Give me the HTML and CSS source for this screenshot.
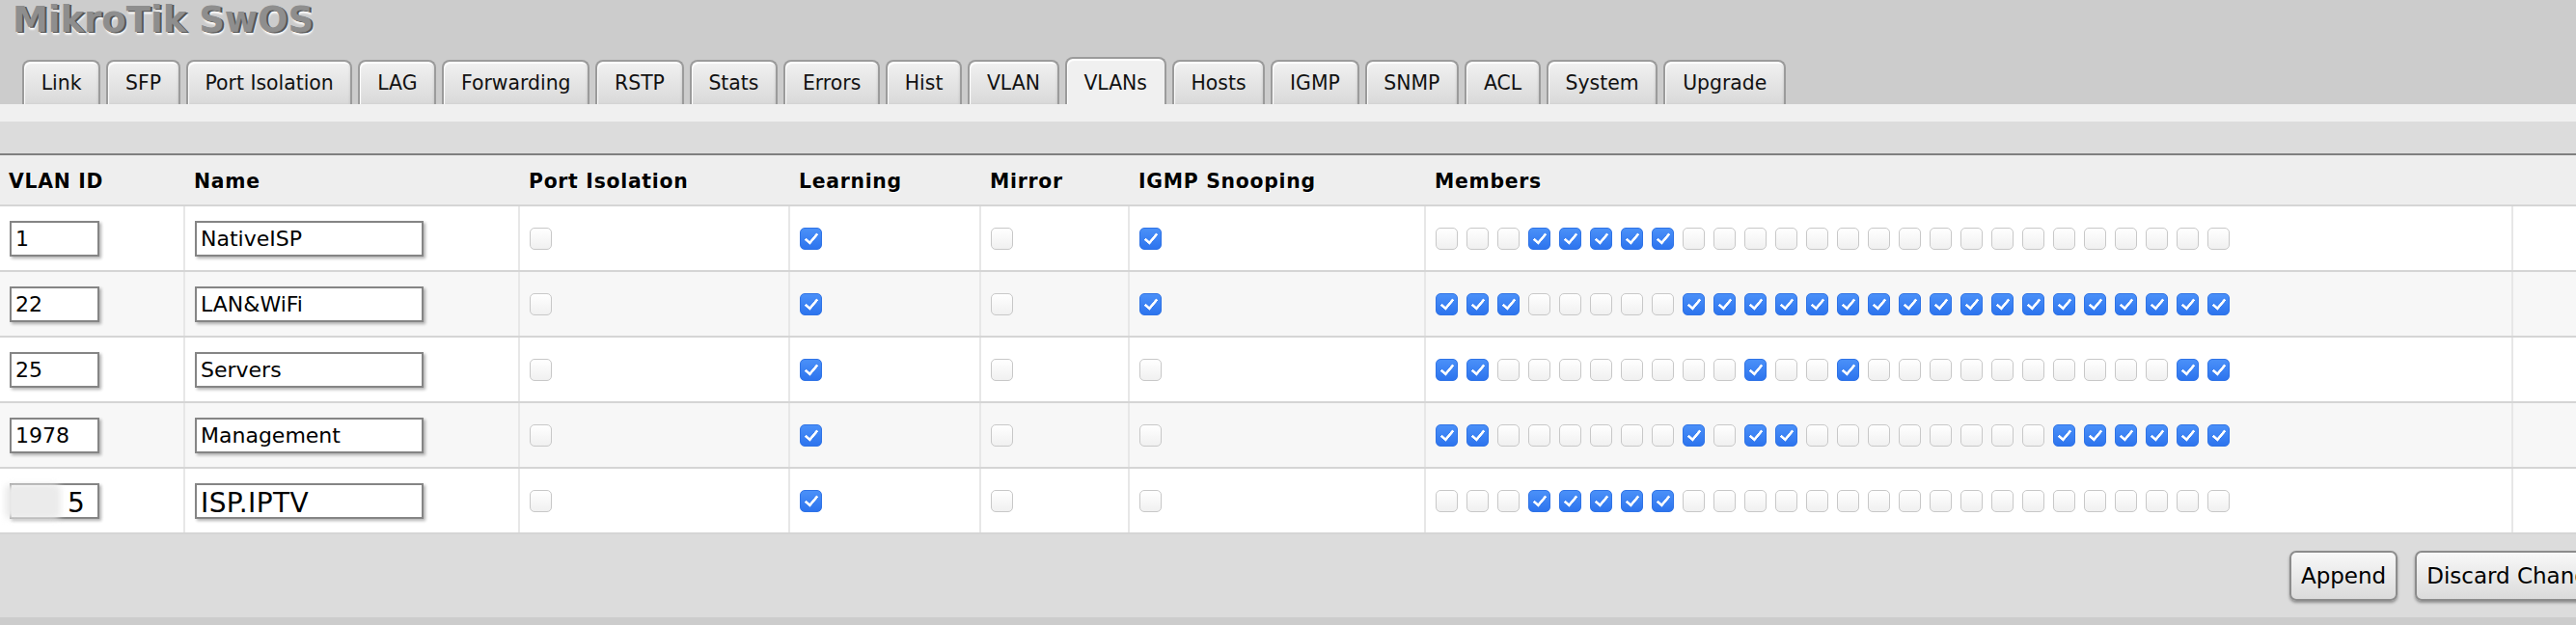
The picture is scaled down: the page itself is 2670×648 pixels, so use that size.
FILE: index.html
```html
<!DOCTYPE html>
<html lang="en">
<head>
<meta charset="utf-8">
<title>MikroTik SwOS - VLANs</title>
<link rel="stylesheet" href="styles.css">
</head>
<body>
<div class="page">
  <header class="top">
    <div class="title">MikroTik SwOS</div>
    <nav class="tabs">
      <a class="tab">Link</a>
      <a class="tab">SFP</a>
      <a class="tab">Port Isolation</a>
      <a class="tab">LAG</a>
      <a class="tab">Forwarding</a>
      <a class="tab">RSTP</a>
      <a class="tab">Stats</a>
      <a class="tab">Errors</a>
      <a class="tab">Hist</a>
      <a class="tab">VLAN</a>
      <a class="tab active">VLANs</a>
      <a class="tab">Hosts</a>
      <a class="tab">IGMP</a>
      <a class="tab">SNMP</a>
      <a class="tab">ACL</a>
      <a class="tab">System</a>
      <a class="tab">Upgrade</a>
    </nav>
  </header>
  <div class="strip"></div>
  <div class="toolbar"></div>

  <div class="vtable">
    <div class="row head">
      <div>VLAN ID</div><div>Name</div><div>Port Isolation</div><div>Learning</div><div>Mirror</div><div>IGMP Snooping</div><div>Members</div><div></div>
    </div>

    <div class="row">
      <div><input class="fld id" value="1"></div>
      <div><input class="fld name" value="NativeISP"></div>
      <div><span class="cb"></span></div>
      <div><span class="cb on"></span></div>
      <div><span class="cb"></span></div>
      <div><span class="cb on"></span></div>
      <div class="members"><span class="cb"></span><span class="cb"></span><span class="cb"></span><span class="cb on"></span><span class="cb on"></span><span class="cb on"></span><span class="cb on"></span><span class="cb on"></span><span class="cb"></span><span class="cb"></span><span class="cb"></span><span class="cb"></span><span class="cb"></span><span class="cb"></span><span class="cb"></span><span class="cb"></span><span class="cb"></span><span class="cb"></span><span class="cb"></span><span class="cb"></span><span class="cb"></span><span class="cb"></span><span class="cb"></span><span class="cb"></span><span class="cb"></span><span class="cb"></span></div>
      <div></div>
    </div>

    <div class="row alt">
      <div><input class="fld id" value="22"></div>
      <div><input class="fld name" value="LAN&amp;WiFi"></div>
      <div><span class="cb"></span></div>
      <div><span class="cb on"></span></div>
      <div><span class="cb"></span></div>
      <div><span class="cb on"></span></div>
      <div class="members"><span class="cb on"></span><span class="cb on"></span><span class="cb on"></span><span class="cb"></span><span class="cb"></span><span class="cb"></span><span class="cb"></span><span class="cb"></span><span class="cb on"></span><span class="cb on"></span><span class="cb on"></span><span class="cb on"></span><span class="cb on"></span><span class="cb on"></span><span class="cb on"></span><span class="cb on"></span><span class="cb on"></span><span class="cb on"></span><span class="cb on"></span><span class="cb on"></span><span class="cb on"></span><span class="cb on"></span><span class="cb on"></span><span class="cb on"></span><span class="cb on"></span><span class="cb on"></span></div>
      <div></div>
    </div>

    <div class="row">
      <div><input class="fld id" value="25"></div>
      <div><input class="fld name" value="Servers"></div>
      <div><span class="cb"></span></div>
      <div><span class="cb on"></span></div>
      <div><span class="cb"></span></div>
      <div><span class="cb"></span></div>
      <div class="members"><span class="cb on"></span><span class="cb on"></span><span class="cb"></span><span class="cb"></span><span class="cb"></span><span class="cb"></span><span class="cb"></span><span class="cb"></span><span class="cb"></span><span class="cb"></span><span class="cb on"></span><span class="cb"></span><span class="cb"></span><span class="cb on"></span><span class="cb"></span><span class="cb"></span><span class="cb"></span><span class="cb"></span><span class="cb"></span><span class="cb"></span><span class="cb"></span><span class="cb"></span><span class="cb"></span><span class="cb"></span><span class="cb on"></span><span class="cb on"></span></div>
      <div></div>
    </div>

    <div class="row alt">
      <div><input class="fld id" value="1978"></div>
      <div><input class="fld name" value="Management"></div>
      <div><span class="cb"></span></div>
      <div><span class="cb on"></span></div>
      <div><span class="cb"></span></div>
      <div><span class="cb"></span></div>
      <div class="members"><span class="cb on"></span><span class="cb on"></span><span class="cb"></span><span class="cb"></span><span class="cb"></span><span class="cb"></span><span class="cb"></span><span class="cb"></span><span class="cb on"></span><span class="cb"></span><span class="cb on"></span><span class="cb on"></span><span class="cb"></span><span class="cb"></span><span class="cb"></span><span class="cb"></span><span class="cb"></span><span class="cb"></span><span class="cb"></span><span class="cb"></span><span class="cb on"></span><span class="cb on"></span><span class="cb on"></span><span class="cb on"></span><span class="cb on"></span><span class="cb on"></span></div>
      <div></div>
    </div>

    <div class="row">
      <div><span class="smudge"><input class="fld id big idfive" value="5"></span></div>
      <div><input class="fld name big" value="ISP.IPTV"></div>
      <div><span class="cb"></span></div>
      <div><span class="cb on"></span></div>
      <div><span class="cb"></span></div>
      <div><span class="cb"></span></div>
      <div class="members"><span class="cb"></span><span class="cb"></span><span class="cb"></span><span class="cb on"></span><span class="cb on"></span><span class="cb on"></span><span class="cb on"></span><span class="cb on"></span><span class="cb"></span><span class="cb"></span><span class="cb"></span><span class="cb"></span><span class="cb"></span><span class="cb"></span><span class="cb"></span><span class="cb"></span><span class="cb"></span><span class="cb"></span><span class="cb"></span><span class="cb"></span><span class="cb"></span><span class="cb"></span><span class="cb"></span><span class="cb"></span><span class="cb"></span><span class="cb"></span></div>
      <div></div>
    </div>
  </div>

  <div class="footer">
    <button class="btn">Append</button>
    <button class="btn">Discard Changes</button>
  </div>
</div>
</body>
</html>
```

FILE: styles.css
```css
html {
  overflow: hidden;
  background: #cccccc;
}

body {
  margin: 0;
  background: #cccccc;
  font-family: "DejaVu Sans", Verdana, sans-serif;
  font-size: 20.4px;
  color: #000;
}

.page {
  width: 2741px;
}

/* ---------- header ---------- */
.title {
  height: 42px;
  line-height: 42px;
  padding-left: 13px;
  font-size: 37px;
  font-weight: bold;
  color: #8e8e8e;
  text-shadow: 2px 1px 0 #555555, 2px 3px 2px #ffffff;
}

.tabs {
  display: flex;
  align-items: flex-end;
  gap: 6px;
  height: 66px;
  padding-left: 23px;
}

.tab {
  height: 44px;
  line-height: 45px;
  padding: 0 17.75px;
  border: 2px solid #9b9b9b;
  border-bottom: 0;
  border-radius: 8px 8px 0 0;
  background: linear-gradient(#f1f1f1, #d9d9d9);
  box-shadow: inset 1px 2px 1px #ffffff, inset -1px 0 2px rgba(0, 0, 0, 0.08);
  color: #111;
  white-space: nowrap;
}

.tab.active {
  padding-top: 3px;
  background: #f0f0f0;
  box-shadow: inset 1px 2px 1px #ffffff;
}

.strip {
  height: 18px;
  background: #f0f0f0;
}

.toolbar {
  height: 33px;
  background: #dcdcdc;
  border-bottom: 2px solid #7f7f7f;
}

/* ---------- table ---------- */
.row {
  display: grid;
  grid-template-columns: 190px 347px 280px 198px 154px 307px 1127px 1fr;
  box-sizing: border-box;
  height: 68px;
  background: #ffffff;
  border-bottom: 2px solid #d5d5d5;
}

.row.alt {
  background: #f7f7f7;
}

.row.head {
  height: 53px;
  background: #eeeeee;
}

.row > div {
  display: flex;
  align-items: center;
  padding-left: 9px;
  border-left: 2px solid #e7e7e7;
  white-space: nowrap;
}

.row > div:first-child {
  border-left: 0;
}

.row.head > div {
  padding-top: 3px;
  border-left-color: transparent;
  font-weight: bold;
  letter-spacing: 0.7px;
  text-shadow: 1px 1px 0 #ffffff;
}

.members {
  gap: 9px;
}

/* inputs */
.fld {
  box-sizing: border-box;
  height: 37px;
  margin: 0 0 0 1px;
  padding: 0 4px;
  border: 2px solid #858585;
  border-radius: 0;
  background: #fff;
  box-shadow: 2px 2px 3px rgba(0, 0, 0, 0.3);
  font-family: "DejaVu Sans", Verdana, sans-serif;
  font-size: 22px;
  color: #000;
  outline: none;
}

.fld.id {
  width: 93px;
}

.fld.name {
  width: 237px;
}

.fld.big {
  font-size: 28px;
  letter-spacing: 0.4px;
  padding-top: 5px;
}

.fld.idfive {
  padding-left: 58px;
}

.smudge {
  position: relative;
  display: inline-flex;
}

.smudge::after {
  content: "";
  position: absolute;
  left: -4px;
  top: 1px;
  width: 58px;
  height: 36px;
  background: #ebebeb;
  border-radius: 6px;
  filter: blur(3px);
}

/* checkboxes */
.cb {
  position: relative;
  box-sizing: border-box;
  flex: none;
  width: 23px;
  height: 23px;
  margin-left: 1px;
  border: 1.5px solid #c8c8c8;
  border-radius: 5px;
  background: linear-gradient(#ffffff, #f0f0f0);
}

.members .cb {
  margin-left: 0;
}

.members .cb:first-child {
  margin-left: 1px;
}

.cb.on {
  border: 1px solid #2f73e6;
  background: linear-gradient(#4a90f8, #2d74ee);
}

.cb.on::after {
  content: "";
  position: absolute;
  left: 7px;
  top: 2.5px;
  width: 5px;
  height: 11px;
  border: solid #ffffff;
  border-width: 0 3px 3px 0;
  border-radius: 1px;
  transform: rotate(40deg);
}

/* ---------- footer ---------- */
.footer {
  display: flex;
  justify-content: flex-end;
  gap: 18px;
  padding: 17px 20px 17px 0;
  background: #dcdcdc;
}

.btn {
  box-sizing: border-box;
  height: 52px;
  padding: 0 10px;
  border: 2px solid #8c8c8c;
  border-radius: 7px;
  background: linear-gradient(#f8f8f8, #dbdbdb);
  box-shadow: 0 2px 3px rgba(0, 0, 0, 0.35);
  font-family: "DejaVu Sans", Verdana, sans-serif;
  font-size: 23px;
  color: #000;
}
```
